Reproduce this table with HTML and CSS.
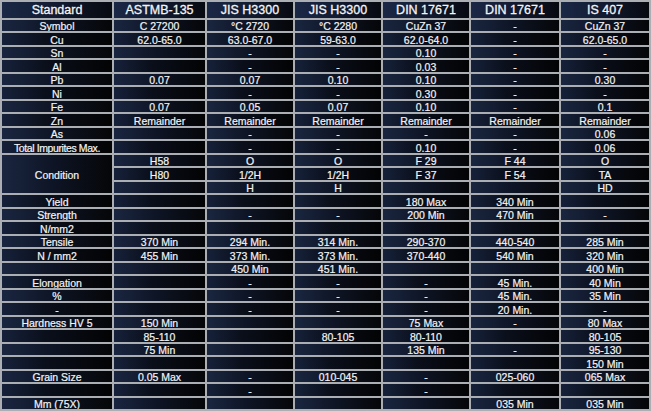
FILE: index.html
```html
<!DOCTYPE html>
<html>
<head>
<meta charset="utf-8">
<link rel="stylesheet" href="styles.css">
</head>
<body>
<div class="spec">
  <div class="row head"><div class="c">Standard</div><div class="c">ASTMB-135</div><div class="c">JIS H3300</div><div class="c">JIS H3300</div><div class="c">DIN 17671</div><div class="c">DIN 17671</div><div class="c">IS 407</div></div>
  <div class="row"><div class="c">Symbol</div><div class="c">C 27200</div><div class="c">°C 2720</div><div class="c">°C 2280</div><div class="c">CuZn 37</div><div class="c">-</div><div class="c">CuZn 37</div></div>
  <div class="row"><div class="c">Cu</div><div class="c">62.0-65.0</div><div class="c">63.0-67.0</div><div class="c">59-63.0</div><div class="c">62.0-64.0</div><div class="c">-</div><div class="c">62.0-65.0</div></div>
  <div class="row"><div class="c">Sn</div><div class="c"></div><div class="c">-</div><div class="c">-</div><div class="c">0.10</div><div class="c">-</div><div class="c">-</div></div>
  <div class="row"><div class="c">Al</div><div class="c"></div><div class="c">-</div><div class="c">-</div><div class="c">0.03</div><div class="c">-</div><div class="c">-</div></div>
  <div class="row"><div class="c">Pb</div><div class="c">0.07</div><div class="c">0.07</div><div class="c">0.10</div><div class="c">0.10</div><div class="c">-</div><div class="c">0.30</div></div>
  <div class="row"><div class="c">Ni</div><div class="c"></div><div class="c">-</div><div class="c">-</div><div class="c">0.30</div><div class="c">-</div><div class="c">-</div></div>
  <div class="row"><div class="c">Fe</div><div class="c">0.07</div><div class="c">0.05</div><div class="c">0.07</div><div class="c">0.10</div><div class="c">-</div><div class="c">0.1</div></div>
  <div class="row"><div class="c">Zn</div><div class="c">Remainder</div><div class="c">Remainder</div><div class="c">Remainder</div><div class="c">Remainder</div><div class="c">Remainder</div><div class="c">Remainder</div></div>
  <div class="row"><div class="c">As</div><div class="c"></div><div class="c">-</div><div class="c">-</div><div class="c">-</div><div class="c">-</div><div class="c">0.06</div></div>
  <div class="row"><div class="c tight">Total Impurites Max.</div><div class="c"></div><div class="c">-</div><div class="c">-</div><div class="c">0.10</div><div class="c">-</div><div class="c">0.06</div></div>
  <div class="row"><div class="c span3">Condition</div><div class="c">H58</div><div class="c">O</div><div class="c">O</div><div class="c">F 29</div><div class="c">F 44</div><div class="c">O</div></div>
  <div class="row"><div class="c">H80</div><div class="c">1/2H</div><div class="c">1/2H</div><div class="c">F 37</div><div class="c">F 54</div><div class="c">TA</div></div>
  <div class="row"><div class="c"></div><div class="c">H</div><div class="c">H</div><div class="c"></div><div class="c"></div><div class="c">HD</div></div>
  <div class="row"><div class="c">Yield</div><div class="c"></div><div class="c"></div><div class="c"></div><div class="c">180 Max</div><div class="c">340 Min</div><div class="c"></div></div>
  <div class="row"><div class="c">Strength</div><div class="c"></div><div class="c">-</div><div class="c">-</div><div class="c">200 Min</div><div class="c">470 Min</div><div class="c">-</div></div>
  <div class="row"><div class="c">N/mm2</div><div class="c"></div><div class="c"></div><div class="c"></div><div class="c"></div><div class="c"></div><div class="c"></div></div>
  <div class="row"><div class="c">Tensile</div><div class="c">370 Min</div><div class="c">294 Min.</div><div class="c">314 Min.</div><div class="c">290-370</div><div class="c">440-540</div><div class="c">285 Min</div></div>
  <div class="row"><div class="c">N / mm2</div><div class="c">455 Min</div><div class="c">373 Min.</div><div class="c">373 Min.</div><div class="c">370-440</div><div class="c">540 Min</div><div class="c">320 Min</div></div>
  <div class="row"><div class="c"></div><div class="c"></div><div class="c">450 Min</div><div class="c">451 Min.</div><div class="c"></div><div class="c"></div><div class="c">400 Min</div></div>
  <div class="row"><div class="c">Elongation</div><div class="c"></div><div class="c">-</div><div class="c">-</div><div class="c">-</div><div class="c">45 Min.</div><div class="c">40 Min</div></div>
  <div class="row"><div class="c">%</div><div class="c"></div><div class="c">-</div><div class="c">-</div><div class="c">-</div><div class="c">45 Min.</div><div class="c">35 Min</div></div>
  <div class="row"><div class="c">-</div><div class="c"></div><div class="c">-</div><div class="c">-</div><div class="c">-</div><div class="c">20 Min.</div><div class="c">-</div></div>
  <div class="row"><div class="c">Hardness HV 5</div><div class="c">150 Min</div><div class="c"></div><div class="c"></div><div class="c">75 Max</div><div class="c">-</div><div class="c">80 Max</div></div>
  <div class="row"><div class="c"></div><div class="c">85-110</div><div class="c"></div><div class="c">80-105</div><div class="c">80-110</div><div class="c"></div><div class="c">80-105</div></div>
  <div class="row"><div class="c"></div><div class="c">75 Min</div><div class="c"></div><div class="c"></div><div class="c">135 Min</div><div class="c">-</div><div class="c">95-130</div></div>
  <div class="row"><div class="c"></div><div class="c"></div><div class="c"></div><div class="c"></div><div class="c"></div><div class="c"></div><div class="c">150 Min</div></div>
  <div class="row"><div class="c">Grain Size</div><div class="c">0.05 Max</div><div class="c">-</div><div class="c">010-045</div><div class="c">-</div><div class="c">025-060</div><div class="c">065 Max</div></div>
  <div class="row"><div class="c"></div><div class="c"></div><div class="c">-</div><div class="c"></div><div class="c">-</div><div class="c"></div><div class="c"></div></div>
  <div class="row"><div class="c">Mm (75X)</div><div class="c"></div><div class="c"></div><div class="c"></div><div class="c"></div><div class="c">035 Min</div><div class="c">035 Min</div></div>
</div>
</body>
</html>
```

FILE: styles.css
```css
html, body {
  margin: 0;
  padding: 0;
  background: #abafb4;
}

.spec {
  box-sizing: border-box;
  width: 651px;
  height: 411px;
  padding: 2px;
  display: grid;
  grid-template-columns: 110px 91px 86px 86px 86px 88px 88px;
  grid-template-rows: 16px repeat(29, 1fr);
  gap: 2px;
  background: #abafb4;
  font-family: "Liberation Sans", Arial, sans-serif;
  color: #f4f4f4;
}

.row {
  display: contents;
}

.c {
  box-sizing: border-box;
  display: flex;
  align-items: center;
  justify-content: center;
  padding-top: 2px;
  white-space: nowrap;
  overflow: hidden;
  font-size: 10.5px;
  line-height: 1;
  -webkit-text-stroke: 0.2px #f4f4f4;
  background: linear-gradient(90deg, #1a2640 0%, #0e1526 45%, #050608 100%);
}

.row:nth-child(odd) .c {
  background: linear-gradient(90deg, #16213a 0%, #0a0f1b 40%, #030304 100%);
}

.row.head .c {
  padding-top: 1px;
  font-size: 12.5px;
  -webkit-text-stroke: 0.3px #f4f4f4;
  background: linear-gradient(90deg, #1b2846 0%, #111a30 50%, #070910 100%);
}

.tight {
  letter-spacing: -0.4px;
}

.span3 {
  grid-row: span 3;
}
```
